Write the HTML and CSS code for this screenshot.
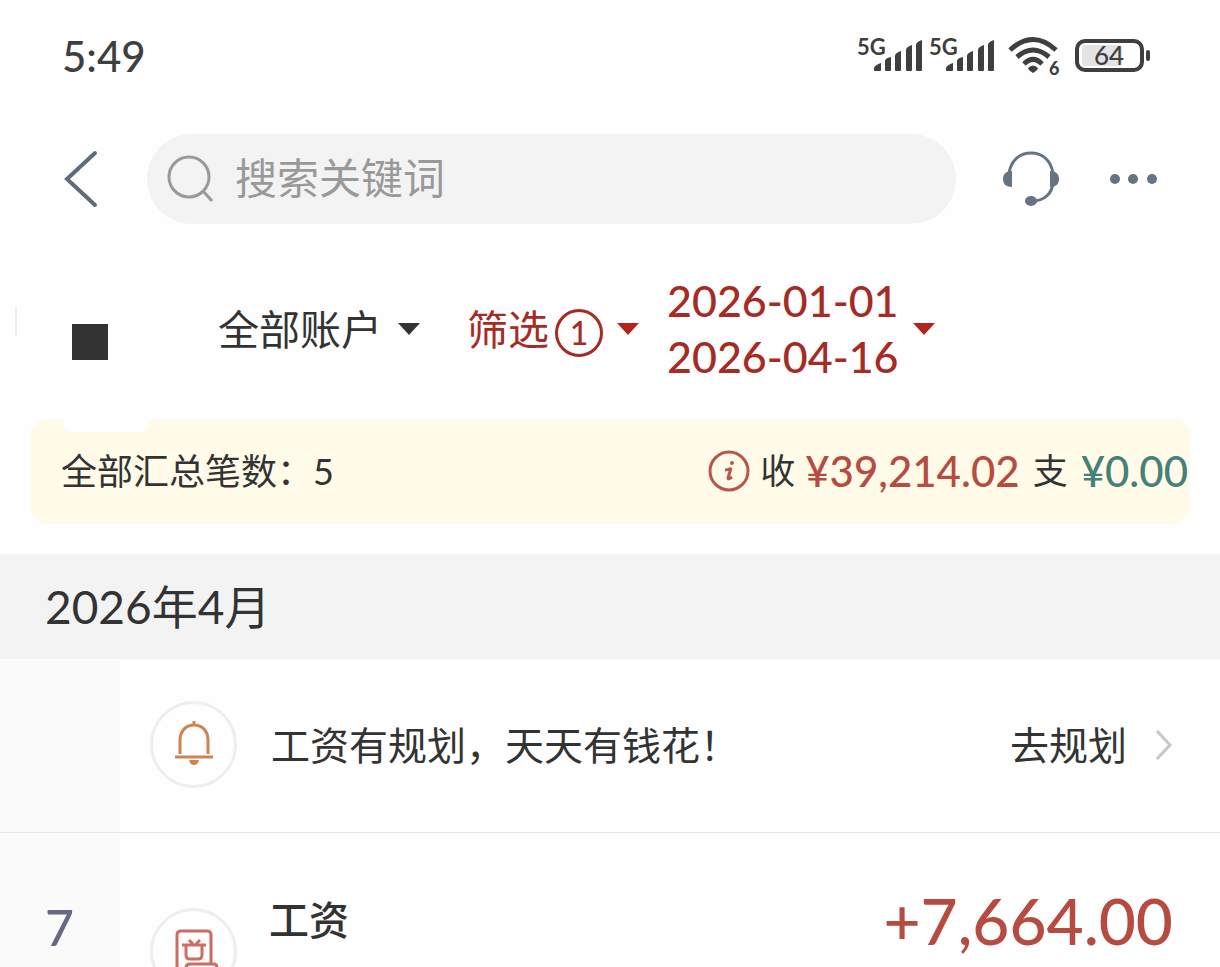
FILE: index.html
```html
<!DOCTYPE html>
<html lang="zh-CN">
<head>
    <meta charset="UTF-8">
    <meta name="viewport" content="width=device-width, initial-scale=1.0">
    <title>收支明细</title>
    <link rel="stylesheet" href="styles.css">
</head>
<body>
    <div class="app">
        <div class="status-bar">
            <span class="time">5:49</span>
            <div class="status-icons">
                <svg class="signal" width="66" height="40" viewBox="0 0 66 40">
                    <text x="0" y="19">5G</text>
                    <path d="M17 34v-2q1-3 7-5v7q0 1-1 1h-5q-1 0-1-1zM28 34V25q0-3 6-4v13q0 1-1 1h-4q-1 0-1-1zM38 34V20q0-3 6-5v19q0 1-1 1h-4q-1 0-1-1zM49 34V14q0-3 6-5v25q0 1-1 1h-4q-1 0-1-1zM59 34V9q0-3 6-5v30q0 1-1 1h-4q-1 0-1-1z"/>
                </svg>
                <svg class="signal" width="66" height="40" viewBox="0 0 66 40">
                    <text x="0" y="19">5G</text>
                    <path d="M17 34v-2q1-3 7-5v7q0 1-1 1h-5q-1 0-1-1zM28 34V25q0-3 6-4v13q0 1-1 1h-4q-1 0-1-1zM38 34V20q0-3 6-5v19q0 1-1 1h-4q-1 0-1-1zM49 34V14q0-3 6-5v25q0 1-1 1h-4q-1 0-1-1zM59 34V9q0-3 6-5v30q0 1-1 1h-4q-1 0-1-1z"/>
                </svg>
                <svg class="wifi" width="52" height="40" viewBox="0 0 52 40">
                    <g fill="none" stroke="#3f3f3f" stroke-width="5">
                        <path d="M2 14Q25-7 48 14"/>
                        <path d="M9 21Q25 7 41 21"/>
                        <path d="M16 28Q25 19 34 28"/>
                    </g>
                    <path d="M20 32q5-5 10 0q0 2-5 5q-5-3-5-5z"/>
                    <text x="41" y="39">6</text>
                </svg>
                <svg class="battery" width="76" height="40" viewBox="0 0 76 40">
                    <rect x="2" y="5" width="65" height="29" rx="8" fill="none" stroke="#3f3f3f" stroke-width="4"/>
                    <rect x="7" y="9" width="40" height="21" rx="4" fill="#e3e3e3"/>
                    <rect x="71" y="14" width="4" height="11" rx="2"/>
                    <text x="19" y="29">64</text>
                </svg>
            </div>
        </div>

        <header class="nav">
            <button class="icon-btn back" type="button" aria-label="返回">
                <svg width="36" height="60" viewBox="0 0 36 60">
                    <path d="M32 4L4 30l28 26" fill="none" stroke="#5e6b7a" stroke-width="4" stroke-linecap="round"/>
                </svg>
            </button>
            <label class="search">
                <svg width="48" height="48" viewBox="0 0 48 48" fill="none" stroke="#999" stroke-width="3">
                    <circle cx="22" cy="22" r="20"/>
                    <path d="M36 36l9 10"/>
                </svg>
                <input type="search" placeholder="搜索关键词" aria-label="搜索关键词">
            </label>
            <button class="icon-btn service" type="button" aria-label="客服">
                <svg width="56" height="56" viewBox="0 0 56 56">
                    <path d="M6 22C8 10 16 2 28 2s20 8 22 20M50 32c-1 10-8 18-21 18" fill="none" stroke="#657382" stroke-width="3"/>
                    <path d="M9 20v16C3 36 0 33 0 28s3-8 9-8zM47 20v16c6 0 9-3 9-8s-3-8-9-8z" fill="#657382"/>
                    <ellipse cx="28" cy="50" rx="6" ry="5" fill="#657382"/>
                </svg>
            </button>
            <button class="icon-btn more" type="button" aria-label="更多">
                <svg width="48" height="12" viewBox="0 0 48 12" fill="#657382">
                    <circle cx="6" cy="6" r="5"/>
                    <circle cx="24" cy="6" r="5"/>
                    <circle cx="43" cy="6" r="5"/>
                </svg>
            </button>
        </header>

        <div class="filters">
            <span class="divider"></span>
            <span class="square"></span>
            <button class="filter account" type="button"><span class="label">全部账户</span><span class="caret"></span></button>
            <button class="filter active" type="button"><span class="label">筛选</span><span class="count">1</span><span class="caret"></span></button>
            <button class="filter active dates" type="button">
                <span class="range">2026-01-01<br>2026-04-16</span>
                <span class="caret"></span>
            </button>
        </div>

        <section class="summary">
            <span class="total">全部汇总笔数：5</span>
            <button class="icon-btn info" type="button" aria-label="说明">
                <svg width="42" height="42" viewBox="0 0 42 42">
                    <circle cx="21" cy="21" r="19" fill="none" stroke="#b9564b" stroke-width="3"/>
                    <circle cx="24" cy="13" r="2" fill="#b9564b"/>
                    <path d="M17 20q4 0 6-2l-3 10q0 2 4-1" fill="none" stroke="#b9564b" stroke-width="3"/>
                </svg>
            </button>
            <span class="kind">收</span>
            <span class="money in">¥39,214.02</span>
            <span class="kind">支</span>
            <span class="money out">¥0.00</span>
        </section>

        <h2 class="month">2026年4月</h2>

        <div class="row">
            <div class="day"></div>
            <a class="tip" href="#plan">
                <span class="badge">
                    <svg width="44" height="48" viewBox="0 0 44 48" fill="none" stroke="#cf8450" stroke-width="3">
                        <path d="M8 33V19C8 10 14 4 22 4s14 6 14 15v14M22 0v5M3 36h38"/>
                        <path d="M17 39h10q-1 5-5 5t-5-5z" fill="#cf8450" stroke="none"/>
                    </svg>
                </span>
                <span class="tip-text">工资有规划，天天有钱花！</span>
                <span class="tip-action">去规划</span>
                <svg class="arrow" width="18" height="32" viewBox="0 0 18 32">
                    <path d="M2 2l13 14L2 30" fill="none" stroke="#c8c8c8" stroke-width="3"/>
                </svg>
            </a>
        </div>

        <div class="row record">
            <div class="day">7</div>
            <div class="entry">
                <span class="badge">
                    <svg width="44" height="48" viewBox="0 0 44 48" fill="none" stroke="#cc6c63" stroke-width="3">
                        <path d="M13 41H8q-3 0-3-3V7q0-4 4-4h26q4 0 4 4v29"/>
                        <path d="M10 17h24M14 17v10q0 4 4 4h8q4 0 4-4V17M17 12l4 4M28 12l-4 4"/>
                        <path d="M14 46v-6q0-4 4-4h24q3 0 3 4v6"/>
                    </svg>
                </span>
                <span class="entry-name">工资</span>
                <span class="entry-amount">+7,664.00</span>
            </div>
        </div>
    </div>
</body>
</html>
```

FILE: styles.css
```css
/* General styles */
* {
    box-sizing: border-box;
}

body {
    margin: 0;
    background: #fefefe;
    color: #333;
    font-family: Lato, "Noto Sans CJK SC", sans-serif;
}

button,
input {
    font: inherit;
    color: inherit;
    border: none;
    background: none;
    padding: 0;
}

.app {
    height: 100vh;
    overflow: hidden;
}

svg {
    display: block;
    flex-shrink: 0;
    overflow: visible;
}

/* Phone status bar */
.status-bar {
    display: flex;
    justify-content: space-between;
    align-items: center;
    height: 112px;
    padding: 0 69px 0 62px;
    color: #3f3f3f;
}

.time {
    font-size: 42px;
    font-weight: 500;
}

.status-icons {
    display: flex;
    fill: #3f3f3f;
}

.signal {
    margin-right: 6px;
}

.signal text {
    font-size: 22px;
    font-weight: 700;
}

.wifi {
    margin: 0 15px 0 7px;
}

.wifi text {
    font-size: 18px;
    font-weight: 900;
}

.battery text {
    font-size: 26px;
    font-weight: 500;
}

/* Navigation */
.nav {
    display: flex;
    align-items: center;
    padding: 22px 63px 0;
}

.icon-btn {
    flex-shrink: 0;
    cursor: pointer;
}

.search {
    display: flex;
    flex: 1;
    align-items: center;
    gap: 20px;
    height: 90px;
    margin: 0 47px 0 48px;
    padding: 0 20px;
    border-radius: 45px;
    background: #f3f3f3;
}

.search input {
    flex: 1;
    min-width: 0;
    font-size: 42px;
    padding-bottom: 2px;
    outline: none;
}

.search input::placeholder {
    color: #999;
    opacity: 1;
}

.more {
    margin-left: 50px;
}

/* Filters */
.filters {
    display: flex;
    align-items: center;
    height: 195px;
    padding: 14px 15px 0;
}

.divider {
    width: 2px;
    height: 28px;
    margin-bottom: 14px;
    background: #ececec;
}

.square {
    width: 36px;
    height: 36px;
    margin: 26px 110px 0 55px;
    background: #333;
}

.filter {
    display: flex;
    align-items: center;
    font-size: 41px;
    white-space: nowrap;
    cursor: pointer;
}

.label {
    padding-bottom: 4px;
}

.account {
    margin-right: 47px;
}

.dates {
    margin-left: 28px;
}

.active {
    color: #a62b24;
}

.caret {
    margin-left: 16px;
    border: 11px solid transparent;
    border-top: 12px solid currentColor;
    border-bottom: none;
}

.active .caret {
    margin-left: 14px;
    border-top-color: #b3241c;
}

.count {
    width: 48px;
    height: 48px;
    margin: 8px 0 0 6px;
    border: 3px solid currentColor;
    border-radius: 50%;
    font-size: 32px;
    line-height: 42px;
    font-weight: 500;
}

.range {
    font-size: 43px;
    line-height: 56px;
    font-weight: 500;
}

/* Summary */
.summary {
    position: relative;
    display: flex;
    align-items: center;
    height: 105px;
    margin: 0 30px;
    padding: 0 2px 2px 31px;
    border-radius: 18px;
    background: #fffbe8;
    white-space: nowrap;
}

.summary::before {
    content: "";
    position: absolute;
    top: 0;
    left: 34px;
    width: 84px;
    height: 13px;
    border-radius: 0 0 6px 6px;
    background: #fefefe;
}

.total {
    margin-right: auto;
    padding-bottom: 4px;
    font-size: 36px;
}

.kind {
    margin: 0 10px;
    padding-bottom: 4px;
    font-size: 35px;
}

.money {
    font-size: 42px;
    font-weight: 500;
}

.money + .kind {
    margin: 0 13px;
}

.in {
    color: #b64c41;
}

.out {
    color: #45807a;
}

/* List */
.month {
    margin: 30px 0 0;
    padding: 0 45px;
    background: #f3f3f3;
    font-size: 46px;
    line-height: 105px;
    font-weight: 400;
}

.row {
    display: flex;
    min-height: 174px;
    border-bottom: 1px solid #e6e6e6;
}

.day {
    flex-shrink: 0;
    width: 120px;
    padding-left: 45px;
    background: #fafafa;
    color: #666985;
    font-size: 50px;
    font-weight: 500;
}

.tip,
.entry {
    display: flex;
    flex: 1;
    align-items: center;
    padding: 0 47px 2px 30px;
    color: inherit;
    text-decoration: none;
    white-space: nowrap;
}

.badge {
    display: flex;
    flex-shrink: 0;
    align-items: center;
    justify-content: center;
    width: 87px;
    height: 87px;
    border: 3px solid #eee;
    border-radius: 50%;
}

.tip-text,
.tip-action {
    padding-bottom: 4px;
    font-size: 39px;
}

.tip-text {
    margin: 0 auto 0 34px;
}

.tip-action {
    margin-right: 28px;
}

.record .day {
    padding-top: 64px;
}

.entry {
    align-items: flex-start;
}

.entry .badge {
    margin-top: 75px;
}

.entry-name {
    margin: 55px auto 0 32px;
    font-size: 40px;
    font-weight: 500;
    line-height: 64px;
}

.entry-amount {
    margin-top: 48px;
    color: #b64c41;
    font-size: 64px;
    line-height: 80px;
    font-weight: 500;
}
```
